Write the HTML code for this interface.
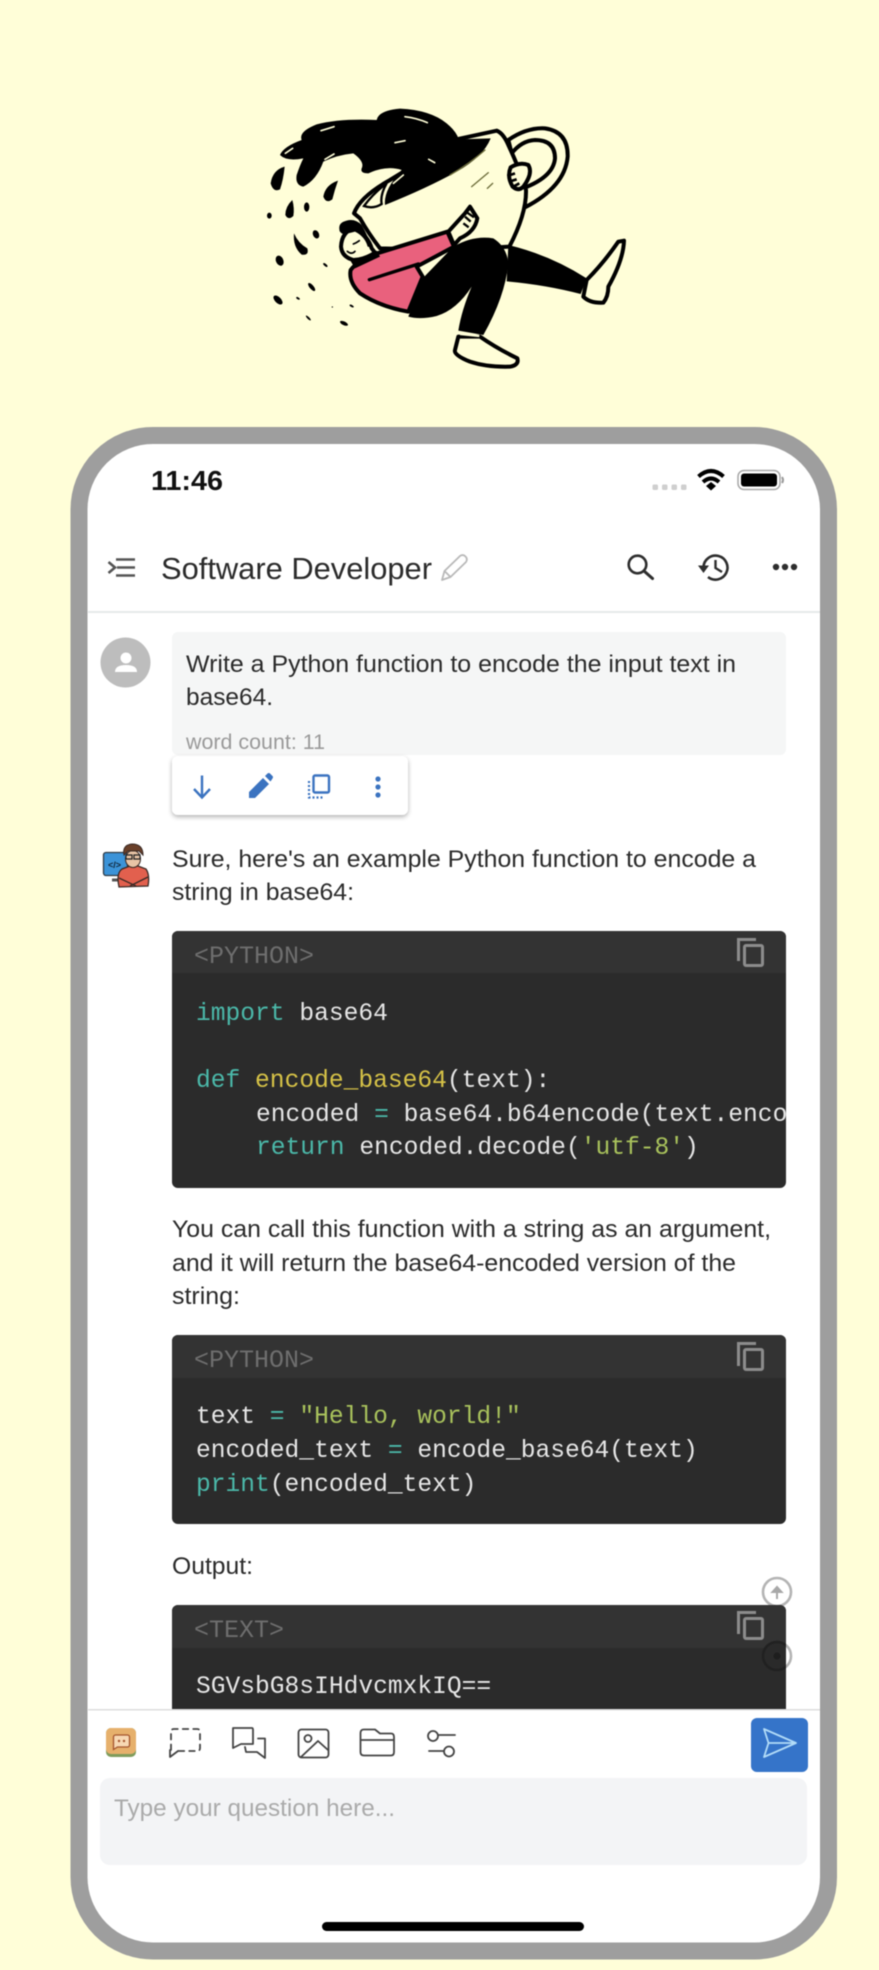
<!DOCTYPE html>
<html lang="en">
<head>
<meta charset="utf-8">
<title>Software Developer</title>
<style>
html,body{margin:0;padding:0;background:#fffed8;width:879px;height:1970px;overflow:hidden}
svg{display:block;filter:blur(.4px)}
text{font-family:"Liberation Sans",sans-serif;white-space:pre}
.t{font-size:24.5px;fill:#2b2b2b}
.m{font-family:"Liberation Mono",monospace;font-size:24.6px;fill:#e6e6e6}
.h{font-family:"Liberation Mono",monospace;font-size:25px;fill:#6e6e6e}
.k{fill:#4bb8a9}.f{fill:#d6c247}.s{fill:#a9c25c}
.ic{fill:none;stroke:#444;stroke-width:1.800;stroke-linecap:round;stroke-linejoin:round}
.cp{fill:none;stroke:#8c8c8c;stroke-width:3}
.ink{stroke:#000;stroke-width:12;stroke-linejoin:round;stroke-linecap:round}
</style>
</head>
<body>
<svg width="879" height="1970" viewBox="0 0 879 1970" xmlns="http://www.w3.org/2000/svg">
<defs>
<clipPath id="b1"><rect x="172" y="931" width="614" height="257" rx="6"/></clipPath>
<clipPath id="b2"><rect x="172" y="1335" width="614" height="189" rx="6"/></clipPath>
<clipPath id="b3"><path d="M172 1709V1611a6 6 0 0 1 6-6H780a6 6 0 0 1 6 6V1709Z"/></clipPath>
<filter id="sh" x="-10%" y="-20%" width="120%" height="150%"><feDropShadow dx="0" dy="2" stdDeviation="2.5" flood-color="#000" flood-opacity=".3"/></filter>
</defs>
<rect width="879" height="1970" fill="#fffed8"/>

<!-- illustration -->
<g transform="translate(240 90) scale(.33333)">
<!-- handle -->
<path d="M805 150Q860 112 915 115Q985 125 983 200Q975 290 855 352L835 300Q940 265 945 205Q945 150 885 150Q845 152 815 190Z" fill="#fffed8" class="ink"/>
<!-- back leg -->
<path d="M805 465Q930 495 1040 565L1022 612Q920 585 800 574Z" fill="#000"/>
<!-- cup -->
<path d="M650 148L770 122Q790 130 805 165Q840 240 858 300Q860 370 808 470L640 480L420 475Q385 430 360 385L342 370Q360 320 450 270Z" fill="#fffed8" class="ink"/>
<!-- coffee -->
<path d="M120 195Q130 170 185 150Q175 125 230 103Q300 85 410 90Q415 62 480 56Q570 60 620 100Q650 125 656 148L752 145Q730 200 650 245Q560 295 435 345Q430 300 485 240Q440 225 385 250Q360 250 365 235Q375 215 340 190Q290 195 250 215Q230 270 190 290Q165 285 170 255Q180 225 190 205Q140 215 120 195Z" fill="#000"/>
<path d="M372 348Q400 310 440 280Q420 315 425 342Q400 358 372 348Z" fill="#fffed8" stroke="#000" stroke-width="7"/>
<g fill="none" stroke="#fffed8" stroke-width="5" stroke-linecap="round">
<path d="M243 122L282 110"/><path d="M495 80Q530 84 562 98"/><path d="M465 158L495 152"/><path d="M136 190L158 175"/><path d="M255 208L282 192"/><path d="M566 208L584 218"/><path d="M460 280L490 255"/>
</g>
<g fill="none" stroke="#6d6d3a" stroke-width="4" stroke-linecap="round">
<path d="M630 255Q690 220 735 180"/><path d="M695 290L745 248"/><path d="M742 295L758 280"/>
</g>
<!-- upper hand -->
<path d="M812 232Q840 215 865 225Q880 250 850 290Q835 305 818 290Q800 260 812 232Z" fill="#fffed8" class="ink"/>
<path d="M802 258L825 250M808 275L830 268M820 290L838 280" stroke="#000" stroke-width="8"/>
<!-- droplets -->
<g fill="#000">
<path d="M134 230Q98 240 92 280Q100 308 120 298Q130 270 134 230Z"/>
<path d="M294 272Q256 285 250 320Q258 342 277 328Q284 300 294 272Z"/>
<path d="M157 330Q136 350 136 375Q145 392 160 378Q164 355 157 330Z"/>
<ellipse cx="200" cy="351" rx="8" ry="14"/><ellipse cx="88" cy="377" rx="7" ry="9"/>
<path d="M162 430Q158 470 185 494Q208 497 202 475Q175 460 162 430Z"/>
<ellipse cx="228" cy="433" rx="9" ry="13" transform="rotate(-25 228 433)"/>
<ellipse cx="119" cy="512" rx="11" ry="16" transform="rotate(-25 119 512)"/>
<ellipse cx="256" cy="525" rx="3.500" ry="8" transform="rotate(-50 256 525)"/>
<ellipse cx="215" cy="591" rx="6" ry="15" transform="rotate(-40 215 591)"/>
<ellipse cx="114" cy="630" rx="9" ry="17" transform="rotate(-45 114 630)"/>
<ellipse cx="174" cy="625" rx="3" ry="6" transform="rotate(-60 174 625)"/>
<ellipse cx="335" cy="648" rx="3" ry="7" transform="rotate(-60 335 648)"/>
<circle cx="277" cy="651" r="2"/>
<ellipse cx="205" cy="684" rx="3" ry="10" transform="rotate(-45 205 684)"/>
<ellipse cx="312" cy="700" rx="5.500" ry="13" transform="rotate(-65 312 700)"/>
</g>
<!-- torso -->
<path d="M332 540Q350 515 405 492L622 425L642 470L530 530L548 560L505 665Q420 650 360 610Q325 575 332 540Z" fill="#e9617d" class="ink"/>
<path d="M388 569L535 522" stroke="#000" stroke-width="10" stroke-linecap="round"/>
<!-- lower hand -->
<path d="M625 425L675 370L690 350L712 385Q705 425 660 445L642 465Z" fill="#fffed8" class="ink"/>
<path d="M675 380L692 395M682 368L702 382M670 400L686 412" stroke="#000" stroke-width="7"/>
<!-- front pants -->
<path d="M505 680L548 565L640 470Q700 435 760 445Q800 470 805 520Q795 620 730 735L655 722Q665 660 695 590Q650 660 590 678Q540 690 505 680Z" fill="#000"/>
<!-- head -->
<path d="M330 510L410 482L420 500L345 535Z" fill="#000"/>
<path d="M345 412Q385 440 395 475L405 488Q370 510 340 510Q305 500 303 470Q305 425 345 412Z" fill="#fffed8" class="ink"/>
<path d="M298 418Q295 398 320 392Q345 385 365 405Q385 440 395 472L383 470Q375 440 345 425Q320 432 310 432Q298 428 298 418Z" fill="#000"/>
<path d="M340 462Q350 458 358 452M322 484Q335 495 345 484" fill="none" stroke="#000" stroke-width="5" stroke-linecap="round"/>
<!-- shoes -->
<path d="M1135 455L1152 452Q1150 510 1105 590Q1105 620 1090 638Q1050 640 1030 620L1040 570Q1090 520 1135 455Z" fill="#fffed8" class="ink"/>
<path d="M655 740L720 740Q770 775 832 805Q838 825 810 830Q740 832 690 815Q640 795 645 780Z" fill="#fffed8" class="ink"/>
<path d="M660 732L718 738" stroke="#fffed8" stroke-width="7"/>
</g>

<!-- phone -->
<rect x="79" y="435.500" width="749.500" height="1515.500" rx="74" fill="#fff" stroke="#9e9e9e" stroke-width="17"/>

<!-- status bar -->
<text x="151" y="490" font-size="27.500" font-weight="700" fill="#111" textLength="72" lengthAdjust="spacingAndGlyphs">11:46</text>
<g fill="#cfcfcf"><rect x="652.500" y="484.500" width="5.500" height="5.500" rx="1.500"/><rect x="662" y="484.500" width="5.500" height="5.500" rx="1.500"/><rect x="671.500" y="484.500" width="5.500" height="5.500" rx="1.500"/><rect x="681" y="484.500" width="5.500" height="5.500" rx="1.500"/></g>
<g fill="none" stroke="#000" stroke-width="4"><path d="M698.500 476.500Q711 465.500 723.500 476.500"/><path d="M703 482Q711 475 719 482"/></g>
<path d="M706 486L711 482L716 486L711 490.500Z" fill="#000"/>
<rect x="738" y="470.500" width="42" height="19" rx="6" fill="none" stroke="#a8a8a8" stroke-width="1.500"/>
<rect x="741" y="473.500" width="36" height="13" rx="3" fill="#000"/>
<path d="M782 477Q784 480 782 483" fill="none" stroke="#999" stroke-width="2"/>

<!-- app bar -->
<path d="M108.500 562L115 567.500L108.500 573M116 559.500H135M117 567.500H135M116 575.500H135" fill="none" stroke="#555" stroke-width="2.600"/>
<text x="161" y="579" font-size="30.500" fill="#2b2b2b" textLength="271" lengthAdjust="spacingAndGlyphs">Software Developer</text>
<path d="M442 580L444.500 571L460 556Q463 554 465.500 556.500Q468 559 466 562L450.500 577ZM444.500 571L450.500 577" fill="none" stroke="#b9b9b9" stroke-width="1.800" stroke-linejoin="round"/>
<circle cx="637.500" cy="564.500" r="8.800" fill="none" stroke="#2e2e2e" stroke-width="2.600"/>
<path d="M644 571L652.500 578.500" stroke="#2e2e2e" stroke-width="3" stroke-linecap="round"/>
<path d="M703.500 567A12 12 0 1 1 708 577" fill="none" stroke="#2e2e2e" stroke-width="2.600"/>
<path d="M698 565.500H709L703.500 573Z" fill="#2e2e2e"/>
<path d="M715.500 560V568L722 572" fill="none" stroke="#2e2e2e" stroke-width="2.400"/>
<g fill="#2e2e2e"><circle cx="776" cy="567" r="3.200"/><circle cx="785" cy="567" r="3.200"/><circle cx="794" cy="567" r="3.200"/></g>
<rect x="88" y="611" width="732" height="2" fill="#e6e9e9"/>

<!-- user message -->
<circle cx="125.500" cy="662.500" r="25" fill="#bdbdbd"/>
<circle cx="126" cy="658" r="5.500" fill="#fff"/>
<path d="M115 672Q115 665 126 665Q137 665 137 672Z" fill="#fff"/>
<rect x="172" y="632" width="614" height="123" rx="6" fill="#f5f6f6"/>
<text class="t" x="186" y="672" textLength="550" lengthAdjust="spacingAndGlyphs">Write a Python function to encode the input text in</text>
<text class="t" x="186" y="705" textLength="87" lengthAdjust="spacingAndGlyphs">base64.</text>
<text x="186" y="749" font-size="21" fill="#9a9a9a" textLength="139" lengthAdjust="spacingAndGlyphs">word count: 11</text>

<rect x="172" y="756" width="236" height="59" rx="6" fill="#fff" filter="url(#sh)"/>
<path d="M202 775.500V797M194 789L202 797.500L210 789" fill="none" stroke="#3b73c0" stroke-width="2.400"/>
<path d="M249 798V792L263 778L269 784L255 798ZM265 776L267.500 773.500Q269 772.500 270 773.500L272.500 776Q273.500 777 272.500 778.500L270.500 781.500Z" fill="#3b73c0"/>
<rect x="313.500" y="775.500" width="15.500" height="17" rx="1.500" fill="none" stroke="#3b73c0" stroke-width="2.400"/>
<path d="M309 781V797.500H324" fill="none" stroke="#3b73c0" stroke-width="2.200" stroke-dasharray="2 2"/>
<g fill="#3b73c0"><circle cx="378" cy="779" r="2.600"/><circle cx="378" cy="787" r="2.600"/><circle cx="378" cy="795" r="2.600"/></g>

<!-- bot avatar -->
<path d="M112 880H128" stroke="#555" stroke-width="3"/>
<rect x="103.500" y="852.500" width="24" height="23" rx="2.500" fill="#3b93d8" stroke="#2f3a44" stroke-width="1.300"/>
<text x="108" y="868" font-size="9" font-weight="700" fill="#10263a">&lt;/&gt;</text>
<path d="M119 887Q116 873 122 869L130 866H138L146 869Q150 875 148 886Z" fill="#e2604e" stroke="#3a2a25" stroke-width="1.300"/>
<path d="M119 878L136 886M148 877L130 886" fill="none" stroke="#3a2a25" stroke-width="1.300"/>
<ellipse cx="133" cy="859" rx="7.500" ry="8.500" fill="#e8c4a6" stroke="#3a2a25" stroke-width="1"/>
<path d="M124 855Q122 845 132 844Q143 844 143 855L139 851L128 851Z" fill="#6a4029" stroke="#3a2a25" stroke-width="1"/>
<path d="M126 855h6v4h-6zM134 855h6v4h-6z" fill="none" stroke="#222" stroke-width="1.200"/>

<!-- bot text -->
<text class="t" x="172" y="867" textLength="584" lengthAdjust="spacingAndGlyphs">Sure, here's an example Python function to encode a</text>
<text class="t" x="172" y="900" textLength="182" lengthAdjust="spacingAndGlyphs">string in base64:</text>

<!-- block 1 -->
<g clip-path="url(#b1)">
<rect x="172" y="931" width="614" height="257" fill="#2b2b2b"/>
<rect x="172" y="931" width="614" height="42" fill="#333"/>
<text class="h" x="194" y="963">&lt;PYTHON&gt;</text>
<text class="m" x="196" y="1020"><tspan class="k">import</tspan> base64</text>
<text class="m" x="196" y="1087"><tspan class="k">def</tspan> <tspan class="f">encode_base64</tspan>(text):</text>
<text class="m" x="256" y="1121">encoded <tspan class="k">=</tspan> base64.b64encode(text.encode('utf-8'))</text>
<text class="m" x="256" y="1154"><tspan class="k">return</tspan> encoded.decode(<tspan class="s">'utf-8'</tspan>)</text>
</g>
<path class="cp" d="M738.500 961V939.500H756"/><rect class="cp" x="744.500" y="945.500" width="18" height="20" rx="1.500"/>

<text class="t" x="172" y="1237" textLength="599" lengthAdjust="spacingAndGlyphs">You can call this function with a string as an argument,</text>
<text class="t" x="172" y="1271" textLength="564" lengthAdjust="spacingAndGlyphs">and it will return the base64-encoded version of the</text>
<text class="t" x="172" y="1304" textLength="68" lengthAdjust="spacingAndGlyphs">string:</text>

<!-- block 2 -->
<g clip-path="url(#b2)">
<rect x="172" y="1335" width="614" height="189" fill="#2b2b2b"/>
<rect x="172" y="1335" width="614" height="43" fill="#333"/>
<text class="h" x="194" y="1367">&lt;PYTHON&gt;</text>
<text class="m" x="196" y="1423">text <tspan class="k">=</tspan> <tspan class="s">"Hello, world!"</tspan></text>
<text class="m" x="196" y="1457">encoded_text <tspan class="k">=</tspan> encode_base64(text)</text>
<text class="m" x="196" y="1491"><tspan class="k">print</tspan>(encoded_text)</text>
</g>
<path class="cp" d="M738.500 1366V1343.500H756"/><rect class="cp" x="744.500" y="1349.500" width="18" height="20" rx="1.500"/>

<text class="t" x="172" y="1574" textLength="81" lengthAdjust="spacingAndGlyphs">Output:</text>

<!-- scroll up -->
<circle cx="777" cy="1592" r="14" fill="#fff" stroke="#b4b4b4" stroke-width="2.600"/>
<path d="M777 1599V1588M772.500 1592L777 1587L781.500 1592Z" fill="#a8a8a8" stroke="#a8a8a8" stroke-width="2"/>

<!-- scroll down ring, light portion -->
<circle cx="777" cy="1656" r="14" fill="#fff" stroke="#b4b4b4" stroke-width="2.600"/>

<!-- block 3 -->
<g clip-path="url(#b3)">
<rect x="172" y="1605" width="614" height="105" fill="#2b2b2b"/>
<rect x="172" y="1605" width="614" height="43" fill="#333"/>
<text class="h" x="194" y="1637">&lt;TEXT&gt;</text>
<text class="m" x="196" y="1693">SGVsbG8sIHdvcmxkIQ==</text>
<circle cx="777" cy="1656" r="14" fill="#2a2a2a" stroke="#212121" stroke-width="2.600"/>
<circle cx="777" cy="1656" r="3.500" fill="#1e1e1e"/>
</g>
<path class="cp" d="M738.500 1634V1612.500H756"/><rect class="cp" x="744.500" y="1618.500" width="18" height="20" rx="1.500"/>

<!-- bottom bar -->
<rect x="88" y="1709" width="732" height="1.500" fill="#dedede"/>
<rect x="106" y="1728" width="30" height="29" rx="5" fill="#7f9c5c"/>
<rect x="106" y="1728" width="30" height="26" rx="5" fill="#e6b06c"/>
<path d="M113.500 1737a2 2 0 0 1 2-2h12a2 2 0 0 1 2 2v8a2 2 0 0 1-2 2h-10l-4 2.500Z" fill="#f7d8b4" stroke="#a5552e" stroke-width="1.300"/>
<circle cx="119" cy="1741" r="1.200" fill="#a5552e"/><circle cx="124" cy="1741" r="1.200" fill="#a5552e"/>

<path class="ic" d="M171 1750V1732Q171 1729 174 1729H197Q200 1729 200 1732V1748Q200 1751 197 1751H178" stroke-dasharray="5.500 5"/>
<path class="ic" d="M170 1750V1757L178 1751"/>
<path class="ic" d="M233 1748V1728H252Q253 1728 253 1730V1744H241L233 1748ZM258 1738.500H265V1758L257 1752H246L245 1747"/>
<rect class="ic" x="298.500" y="1729.500" width="30" height="28" rx="3"/>
<circle class="ic" cx="308" cy="1738.500" r="3.500"/>
<path class="ic" d="M301 1757L318 1741L328 1750"/>
<path class="ic" d="M360.500 1752V1733Q360.500 1729.500 364 1729.500H375L380 1733.500H391Q394 1733.500 394 1737V1752Q394 1755.500 391 1755.500H364Q360.500 1755.500 360.500 1752ZM360.500 1740H394"/>
<circle class="ic" cx="433" cy="1736" r="5"/><path class="ic" d="M438 1735H455M429 1751H444"/><circle class="ic" cx="449" cy="1751.500" r="5"/>

<rect x="751" y="1718" width="57" height="54" rx="6" fill="#3574c9"/>
<path d="M764 1729L796 1743L764 1757L768.500 1743ZM768.500 1743H796" fill="none" stroke="#b2dcf8" stroke-width="1.800" stroke-linejoin="round"/>

<rect x="100" y="1778" width="707" height="87" rx="10" fill="#f3f4f6"/>
<text x="114" y="1816" font-size="24" fill="#aaaaaa" textLength="281" lengthAdjust="spacingAndGlyphs">Type your question here...</text>

<rect x="322" y="1922" width="262" height="9" rx="4.500" fill="#000"/>
</svg>
</body>
</html>
